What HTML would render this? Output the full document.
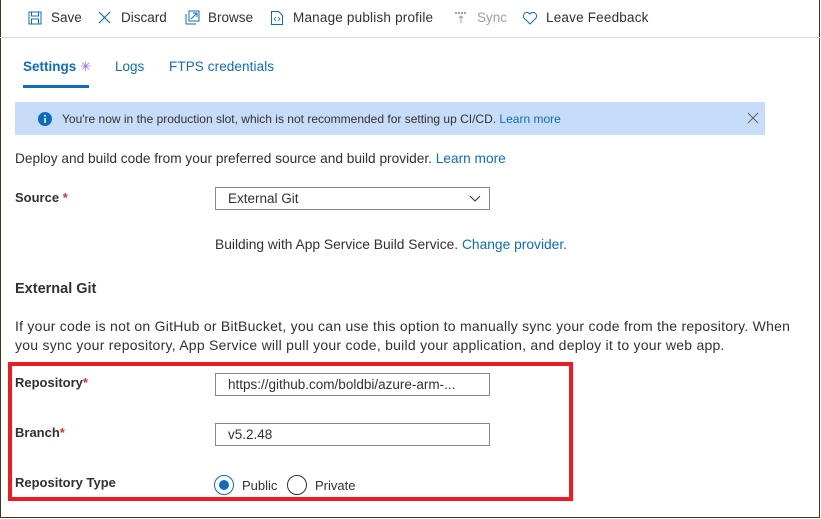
<!DOCTYPE html>
<html><head><meta charset="utf-8"><style>
*{box-sizing:border-box;margin:0;padding:0}
body{width:821px;height:519px;background:#fff;font-family:"Liberation Sans",sans-serif;font-size:13px;color:#323130;position:relative;overflow:hidden}
.frame{position:absolute;left:0;top:0;width:820px;height:518px;border:1px solid #3b3a14;border-top:none}
.a{position:absolute;white-space:nowrap}
.tb{top:10px;font-size:13.5px}
.link{color:#0f6cbd}
.inp{position:absolute;left:215px;width:275px;height:23px;border:1px solid #8a8886;font-size:13.5px;padding:3px 0 0 12px}
.lbl{font-weight:bold;font-size:13px}
.req{color:#d13438}
.t{font-size:14px;letter-spacing:.2px}
</style></head><body>
<div class="frame"></div>
<div class="a" style="left:0;top:37px;width:820px;border-top:1px solid #d8d8d8"></div>
<svg class="a" style="left:28px;top:11px" width="14" height="14" viewBox="0 0 14 14"><rect x="1" y="1" width="12" height="12" fill="none" stroke="#0f6cbd"/><rect x="3.5" y="1" width="7" height="4" fill="none" stroke="#0f6cbd"/><rect x="3.5" y="8" width="7" height="5" fill="none" stroke="#0f6cbd"/></svg>
<div class="a tb" style="left:51px">Save</div>
<svg class="a" style="left:98px;top:11px" width="13" height="13"><path d="M1 1L12 12M12 1L1 12" stroke="#0f6cbd" stroke-width="1.2"/></svg>
<div class="a tb" style="left:121px">Discard</div>
<svg class="a" style="left:184px;top:10px" width="16" height="16"><path d="M2 4v10h10" fill="none" stroke="#0f6cbd"/><path d="M5 1h10v10H5z" fill="none" stroke="#0f6cbd"/><path d="M7 9l6-6M9 3h4v4" fill="none" stroke="#0f6cbd"/></svg>
<div class="a tb" style="left:208px">Browse</div>
<svg class="a" style="left:270px;top:10px" width="14" height="16"><path d="M1.5 1.5h7l4 4v9h-11z" fill="none" stroke="#0f6cbd"/><path d="M6 7l-2 2 2 2M8 7l2 2-2 2" fill="none" stroke="#0f6cbd" stroke-width=".8"/></svg>
<div class="a tb" style="left:293px;letter-spacing:.2px">Manage publish profile</div>
<svg class="a" style="left:454px;top:11px" width="14" height="13"><path d="M1 2h12" stroke="#a19f9d" stroke-width="2" stroke-dasharray="2 1"/><path d="M7 12V5M5 7l2-2 2 2" fill="none" stroke="#a19f9d"/></svg>
<div class="a tb" style="left:477px;color:#a19f9d">Sync</div>
<svg class="a" style="left:522px;top:11px" width="16" height="14"><path d="M8 13L2 7A3.3 3.3 0 0 1 8 3a3.3 3.3 0 0 1 6 4z" fill="none" stroke="#0f6cbd"/></svg>
<div class="a tb" style="left:546px;letter-spacing:.2px">Leave Feedback</div>
<div class="a" style="left:23px;top:59px;font-size:13.5px;color:#0f6cbd;font-weight:bold">Settings <span style="color:#a461d8;font-weight:normal">✳</span></div>
<div class="a" style="left:23px;top:85px;width:66px;height:3px;background:#0f6cbd"></div>
<div class="a link" style="left:115px;top:59px;font-size:13.5px">Logs</div>
<div class="a link" style="left:169px;top:59px;font-size:13.5px;letter-spacing:.1px">FTPS credentials</div>
<div class="a" style="left:15px;top:102px;width:750px;height:33px;background:#c7dcf8"></div>
<svg class="a" style="left:38px;top:112px" width="14" height="14"><circle cx="7" cy="7" r="7" fill="#0f6cbd"/><rect x="6.3" y="6" width="1.5" height="5" fill="#fff"/><circle cx="7" cy="3.8" r="1" fill="#fff"/></svg>
<div class="a" style="left:62px;top:112px;font-size:12px">You're now in the production slot, which is not recommended for setting up CI/CD. <span class="link">Learn more</span></div>
<svg class="a" style="left:747px;top:112px" width="12" height="12"><path d="M1 1L11 11M11 1L1 11" stroke="#605e5c"/></svg>
<div class="a" style="left:15px;top:151px;font-size:13.7px">Deploy and build code from your preferred source and build provider. <span class="link">Learn more</span></div>
<div class="a lbl" style="left:15px;top:190px">Source<span class="req"> *</span></div>
<div class="inp" style="top:187px">External Git</div>
<svg class="a" style="left:469px;top:195px" width="12" height="8"><path d="M1 1l5 5 5-5" fill="none" stroke="#323130"/></svg>
<div class="a" style="left:215px;top:237px;font-size:13.8px">Building with App Service Build Service. <span class="link">Change provider.</span></div>
<div class="a" style="left:15px;top:281px;font-weight:bold;font-size:14.5px">External Git</div>
<div class="a t" style="left:15px;top:317px;line-height:19px;letter-spacing:.25px">If your code is not on GitHub or BitBucket, you can use this option to manually sync your code from the repository. When<br>you sync your repository, App Service will pull your code, build your application, and deploy it to your web app.</div>
<div class="a" style="left:8px;top:362px;width:565px;height:139px;border:4px solid #ed1c24"></div>
<div class="a lbl" style="left:15px;top:375px">Repository<span class="req">*</span></div>
<div class="inp" style="top:373px">https://github.com/boldbi/azure-arm-...</div>
<div class="a lbl" style="left:15px;top:425px">Branch<span class="req">*</span></div>
<div class="inp" style="top:423px">v5.2.48</div>
<div class="a lbl" style="left:15px;top:475px">Repository Type</div>
<div class="a" style="left:214px;top:475px;width:20px;height:20px;border:1px solid #0f6cbd;border-radius:50%"></div>
<div class="a" style="left:219px;top:480px;width:10px;height:10px;background:#0f6cbd;border-radius:50%"></div>
<div class="a" style="left:242px;top:478px">Public</div>
<div class="a" style="left:287px;top:475px;width:20px;height:20px;border:1px solid #323130;border-radius:50%"></div>
<div class="a" style="left:315px;top:478px">Private</div>
</body></html>
